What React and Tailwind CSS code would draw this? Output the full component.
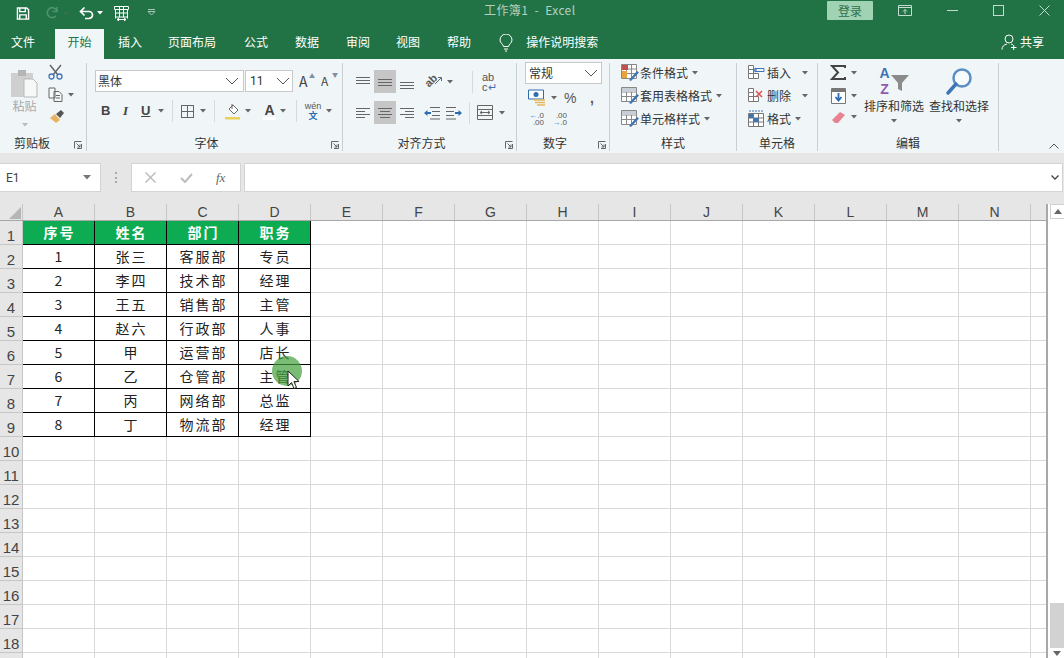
import React from 'react';

const cjk = { fontFamily: '"Noto Sans CJK SC", "Noto Sans", sans-serif' };

const tabs = ['插入', '页面布局', '公式', '数据', '审阅', '视图', '帮助'];
const tabGaps = ['ml-[14px]', 'ml-[26px]', 'ml-[28px]', 'ml-[27px]', 'ml-[27px]', 'ml-[26px]', 'ml-[27px]'];

const columns = ['A', 'B', 'C', 'D', 'E', 'F', 'G', 'H', 'I', 'J', 'K', 'L', 'M', 'N'];
const people = [
  ['序号', '姓名', '部门', '职务'],
  ['1', '张三', '客服部', '专员'],
  ['2', '李四', '技术部', '经理'],
  ['3', '王五', '销售部', '主管'],
  ['4', '赵六', '行政部', '人事'],
  ['5', '甲', '运营部', '店长'],
  ['6', '乙', '仓管部', '主管'],
  ['7', '丙', '网络部', '总监'],
  ['8', '丁', '物流部', '经理'],
];
const rows = Array.from({ length: 19 }, (_, i) => i + 1);

const Caret = ({ className = '' }) => (
  <svg width="6" height="4" viewBox="0 0 6 4" className={`shrink-0 ${className}`}>
    <path d="M0 0h6L3 3.5z" fill="#666" />
  </svg>
);

const Chevron = ({ className = '' }) => (
  <svg width="14" height="8" viewBox="0 0 14 8" className={`shrink-0 ${className}`}>
    <path d="M1 1l6 6 6-6" fill="none" stroke="#555" />
  </svg>
);

const Launcher = ({ className = '' }) => (
  <svg width="8" height="8" viewBox="0 0 8 8" className={`shrink-0 ${className}`}>
    <path d="M.5 7.500V.5H7.500M7.500 3v4.500H3M2.500 2.500l3.500 3.500M6 3.500V6H3.500" fill="none" stroke="#666" />
  </svg>
);

// three or so horizontal lines, used by the alignment buttons
const Lines = ({ y, x = [[0, 14], [0, 14], [0, 14]], color = '#666' }) => (
  <svg width="14" height="14" viewBox="0 0 14 14" className="shrink-0">
    {x.map(([a, b], i) => (
      <path key={i} d={`M${a} ${y + i * 3 + 0.5}H${b}`} stroke={color} />
    ))}
  </svg>
);

const Active = ({ children }) => (
  <div className="w-[22px] h-[23px] bg-[#c6c6c6] flex items-center justify-center">{children}</div>
);

const Sep = ({ className = '' }) => <div className={`w-px h-[22px] bg-[#d5dadc] shrink-0 ${className}`} />;

const Group = ({ width, label, labelClass = '', launcher, launcherClass, children }) => (
  <div className={`${width} shrink-0 h-[88px] border-r border-[#c9ced0] flex flex-col relative`}>
    <div className="h-[77px] -mt-[4px] flex flex-col">{children}</div>
    <div className={`text-xs leading-4 text-center text-[#333] mt-[1px] ${labelClass}`}>{label}</div>
    {launcher && <Launcher className={`absolute bottom-[2px] ${launcherClass}`} />}
  </div>
);

function TitleBar() {
  return (
    <div className="h-[28px] flex items-center relative text-white">
      <svg width="14" height="13" viewBox="0 0 14 14" className="ml-[16px] -mt-[2px]">
        <path d="M1 1h10l2 2v10H1z M3.5 1v4h6V1 M3.5 13V8.5h7V13" fill="none" stroke="#fff" strokeWidth="1.5" />
      </svg>
      <svg width="17" height="14" viewBox="0 0 17 14" className="ml-[14px] -mt-[2px]">
        <path d="M13 5a5 5 0 1 0-1 5M13 1v4.500H8.500" fill="none" stroke="#4f9270" strokeWidth="1.600" />
      </svg>
      <Caret className="ml-[2px] opacity-30" />
      <svg width="16" height="14" viewBox="0 0 16 14" className="ml-[9px] -mt-[2px]">
        <path d="M3 5.500h8a3.500 3.500 0 0 1 0 7H7M6.500 1.500L2.500 5.500l4 4" fill="none" stroke="#fff" strokeWidth="1.700" />
      </svg>
      <svg width="6" height="4" viewBox="0 0 6 4" className="ml-[3px] -mt-[2px]">
        <path d="M0 0h6L3 3.500z" fill="#fff" />
      </svg>
      <svg width="17" height="17" viewBox="0 0 17 17" className="ml-[10px] -mt-[2px]">
        <path d="M1.500 1.500h14v3h-14zM2.500 4.500v9M14.500 4.500v9M6.500 1.500v11M10.500 1.500v11M2.500 8h12M2.500 12h12M4 14.500h9M4 14.500l2-1.500M4 14.500l2 1.500M13 14.500l-2-1.500M13 14.500l-2 1.500" fill="none" stroke="#fff" />
      </svg>
      <svg width="9" height="7" viewBox="0 0 9 7" className="ml-[17px] -mt-[4px]">
        <path d="M1 .5h7M1 2.500l3.500 3.500L8 2.500z" fill="none" stroke="#a9c9b8" />
      </svg>
      <div className="absolute left-[484px] top-0 text-xs leading-5 text-[#b5cfc0] tracking-[0.4px] whitespace-pre">工作簿1  -  Excel</div>
      <div className="ml-auto flex items-center mb-[7px]">
        <div className="w-[46px] h-[19px] bg-[#a0d3b3] rounded-[1px] text-xs leading-[19px] text-center text-[#2f6f4c]">登录</div>
        <svg width="14" height="11" viewBox="0 0 14 11" className="ml-[25px]">
          <path d="M.5.500h13v10H.5zM.5 2.500h13M7 9V4.500M5 6.500l2-2 2 2" fill="none" stroke="#c4dccf" />
        </svg>
        <div className="w-[11px] h-px bg-[#c4dccf] ml-[35px]" />
        <div className="w-[11px] h-[11px] border border-[#c4dccf] ml-[35px]" />
        <svg width="11" height="11" viewBox="0 0 11 11" className="ml-[35px] mr-[14px]">
          <path d="M.5.500l10 10M10.500.500l-10 10" stroke="#c4dccf" />
        </svg>
      </div>
    </div>
  );
}

function TabBar() {
  return (
    <div className="h-[31px] flex items-end text-xs text-white relative">
      <div className="h-[30px] leading-[26px] ml-[11px]">文件</div>
      <div className="h-[30px] w-[49px] ml-[20px] bg-[#f0f6f8] text-[#217346] text-center leading-[26px]">开始</div>
      {tabs.map((t, i) => (
        <div key={t} className={`h-[30px] leading-[26px] ${tabGaps[i]}`}>{t}</div>
      ))}
      <svg width="14" height="18" viewBox="0 0 14 18" className="ml-[28px] mb-[7px]">
        <path d="M4.500 12.500C4 10 1 9 1 6a6 6 0 0 1 12 0c0 3-3 4-3.500 6.500zM5 15h4M6 17h2" fill="none" stroke="#fff" />
      </svg>
      <div className="h-[30px] leading-[26px] ml-[13px]">操作说明搜索</div>
      <div className="ml-auto mr-[20px] flex items-center h-[30px] pb-[4px]">
        <svg width="16" height="16" viewBox="0 0 16 16">
          <path d="M4 5a4 4 0 1 0 8 0 4 4 0 0 0-8 0zM1 15.500c0-3 2-5 5-5.500M10 10c1 .2 1.500.5 2 1M10 13.500h5.500M12.700 11v5" fill="none" stroke="#fff" />
        </svg>
        <span className="ml-[3px]">共享</span>
      </div>
    </div>
  );
}

function Clipboard() {
  return (
    <Group width="w-[87px]" label="剪贴板" labelClass="pr-[22px]" launcher launcherClass="right-[4px]">
      <div className="flex">
        <div className="ml-[10px] w-[29px] flex flex-col items-center">
          <svg width="29" height="30" viewBox="0 0 29 30" className="mt-[9px]">
            <path d="M1 5h22v24H1z" fill="#cfcfcf" />
            <path d="M8 2h8v6H8z" fill="#b5b5b5" />
            <path d="M14 11h9l4 4v14H14z" fill="#f6f8f8" stroke="#b7b7b7" />
          </svg>
          <div className="text-xs leading-4 text-[#a8a8a8]">粘贴</div>
          <Caret className="mt-[9px] opacity-40" />
        </div>
        <div className="ml-[9px] flex flex-col">
          <svg width="15" height="16" viewBox="0 0 15 16" className="mt-[5px]">
            <path d="M2 1l8 10M13 1L5 11" stroke="#666" strokeWidth="1.500" fill="none" />
            <circle cx="3.500" cy="12.500" r="2.500" fill="none" stroke="#3f74b5" strokeWidth="1.300" />
            <circle cx="11.500" cy="12.500" r="2.500" fill="none" stroke="#3f74b5" strokeWidth="1.300" />
          </svg>
          <div className="flex items-center mt-[7px]">
            <svg width="15" height="15" viewBox="0 0 15 15">
              <path d="M1 1h6v10H1zM6 4.500h5l3 3v7H6zM8 8.500h4M8 11h4" fill="#f4f8f9" stroke="#666" />
            </svg>
            <Caret className="ml-[5px]" />
          </div>
          <svg width="16" height="15" viewBox="0 0 16 15" className="mt-[7px] ml-[1px]">
            <path d="M1 9l5-4 5 6-4 3z" fill="#e6b45f" />
            <path d="M7 5l5-4 3 3-4 5z" fill="#555" />
          </svg>
        </div>
      </div>
    </Group>
  );
}

function Font() {
  return (
    <Group width="w-[256px]" label="字体" labelClass="pr-[16px]" launcher launcherClass="right-[3px]">
      <div className="flex items-center mt-[11px] ml-[8px] h-[22px]">
        <div className="w-[149px] h-[22px] bg-white border border-[#c8c8c8] flex items-center justify-between px-[2px] text-xs text-[#333]">
          黑体<Chevron className="mr-[2px]" />
        </div>
        <div className="w-[48px] h-[22px] ml-px bg-white border border-[#c8c8c8] flex items-center justify-between pl-[4px] pr-[2px] text-xs text-[#333]" style={{ fontFamily: 'Roboto, sans-serif' }}>
          11<Chevron />
        </div>
        <div className="ml-[6px] w-[14px] text-[14px] text-[#444] relative leading-none">A<span className="absolute -right-[2px] -top-[1px] text-[6px] text-[#7b8fa5]">▲</span></div>
        <div className="ml-[8px] w-[14px] text-xs text-[#444] relative leading-none">A<span className="absolute -right-[3px] -top-[3px] text-[6px] text-[#7b8fa5]">▼</span></div>
      </div>
      <div className="flex items-center mt-[7px] h-[24px] text-[#444]" style={{ fontFamily: '"Liberation Sans", sans-serif' }}>
        <span className="ml-[14px] w-[10px] text-[13px] font-bold">B</span>
        <span className="ml-[12px] w-[10px] text-[13px] italic font-bold" style={{ fontFamily: '"Liberation Serif", serif' }}>I</span>
        <span className="ml-[8px] w-[11px] text-[13px] font-bold underline">U</span>
        <Caret className="ml-[6px]" />
        <Sep className="ml-[8px]" />
        <div className="w-[13px] h-[13px] ml-[8px] border border-[#666] relative">
          <div className="absolute left-[5px] top-0 bottom-0 w-px bg-[#666]" />
          <div className="absolute top-[5px] left-0 right-0 h-px bg-[#666]" />
        </div>
        <Caret className="ml-[6px]" />
        <Sep className="ml-[8px]" />
        <svg width="17" height="17" viewBox="0 0 17 17" className="ml-[9px]">
          <path d="M5 6l4-4 5 5-4 4z" fill="#fff" stroke="#666" />
          <path d="M8 1v5" stroke="#666" />
          <path d="M1 14h15v2.500H1z" fill="#e8d25a" />
        </svg>
        <Caret className="ml-[4px]" />
        <div className="ml-[12px] w-[13px] text-[14px] font-bold leading-none text-center border-b-[3px] border-white">A</div>
        <Caret className="ml-[4px]" />
        <Sep className="ml-[10px]" />
        <div className="ml-[7px] w-[18px] flex flex-col items-center leading-none">
          <span className="text-[9px] text-[#555]">wén</span>
          <span className="text-[9px] text-[#2c6db0] font-bold" style={cjk}>文</span>
        </div>
        <Caret className="ml-[4px]" />
      </div>
    </Group>
  );
}

function Alignment() {
  return (
    <Group width="w-[174px]" label="对齐方式" labelClass="pr-[16px]" launcher launcherClass="right-[3px]">
      <div className="flex items-center mt-[11px] ml-[13px] h-[23px]">
        <Lines y={2} />
        <div className="ml-[4px]"><Active><Lines y={4} /></Active></div>
        <div className="ml-[4px]"><Lines y={7} /></div>
        <div className="ml-[10px] w-[19px] h-[17px] relative" style={{ fontFamily: '"Liberation Sans", sans-serif' }}>
          <span className="block w-[14px] text-[11px] leading-[14px] text-[#555] font-bold -rotate-45">ab</span>
          <svg width="9" height="9" viewBox="0 0 9 9" className="absolute right-0 top-[3px]">
            <path d="M1 8l6-6M4 1.500h3.500V5" fill="none" stroke="#666" />
          </svg>
        </div>
        <Caret className="ml-[4px]" />
        <Sep className="ml-[19px]" />
        <div className="ml-[9px] text-[11px] leading-[10px] text-[#555] w-[15px]" style={{ fontFamily: '"Liberation Sans", sans-serif' }}>ab<br />c<span className="text-[#3f74b5]">↵</span></div>
      </div>
      <div className="flex items-center mt-[8px] ml-[13px] h-[23px]">
        <Lines y={2} x={[[0, 14], [0, 9], [0, 14], [0, 9]]} />
        <div className="ml-[4px]"><Active><Lines y={2} x={[[0, 14], [2, 12], [0, 14], [2, 12]]} /></Active></div>
        <div className="ml-[4px]"><Lines y={2} x={[[0, 14], [5, 14], [0, 14], [5, 14]]} /></div>
        <svg width="16" height="14" viewBox="0 0 16 14" className="ml-[10px]">
          <path d="M6 1.500h10M8 5.500h8M8 9.500h8M6 13h10" stroke="#666" />
          <path d="M0 7l3.500-3v2H7v2H3.500v2z" fill="#2c6db0" />
        </svg>
        <svg width="16" height="14" viewBox="0 0 16 14" className="ml-[6px]">
          <path d="M0 1.500h10M0 5.500h8M0 9.500h8M0 13h10" stroke="#666" />
          <path d="M16 7l-3.500-3v2H9v2h3.500v2z" fill="#2c6db0" />
        </svg>
        <Sep className="ml-[7px]" />
        <svg width="16" height="15" viewBox="0 0 16 15" className="ml-[7px]">
          <path d="M.5.500h15v14H.5zM.5 4.500h15M.5 10.500h15M3 7.500h10M3 7.500l2-1.500M3 7.500l2 1.500M13 7.500l-2-1.500M13 7.500l-2 1.500" fill="none" stroke="#666" />
        </svg>
        <Caret className="ml-[6px]" />
      </div>
    </Group>
  );
}

function NumberGroup() {
  return (
    <Group width="w-[93px]" label="数字" labelClass="pr-[16px]" launcher launcherClass="right-[3px]">
      <div className="ml-[8px] mt-[3px] w-[77px] h-[22px] bg-white border border-[#c8c8c8] flex items-center justify-between pl-[3px] pr-[3px] text-xs text-[#333]">
        常规<Chevron />
      </div>
      <div className="flex items-center ml-[11px] mt-[3px] h-[21px] text-[#555]">
        <svg width="18" height="17" viewBox="0 0 18 17">
          <path d="M.5 1h15v9H.5z" fill="#fff" stroke="#2c6db0" />
          <circle cx="8" cy="5.500" r="2.500" fill="#2c6db0" />
          <path d="M6 11h11M7 13.500h10M9 16h8" stroke="#e4b95c" strokeWidth="1.500" />
        </svg>
        <Caret className="ml-[5px]" />
        <span className="ml-[7px] w-[14px] text-[14px] leading-none" style={{ fontFamily: '"Liberation Sans", sans-serif' }}>%</span>
        <span className="ml-[12px] text-[14px] font-bold leading-none" style={{ fontFamily: '"Liberation Sans", sans-serif' }}>,</span>
      </div>
      <div className="flex items-center ml-[11px] mt-[3px] h-[16px] text-[8px] leading-[7px] text-[#555]" style={{ fontFamily: '"Liberation Sans", sans-serif' }}>
        <div className="w-[16px] text-right"><span className="text-[#2c6db0]">←</span>.0<br />.00</div>
        <div className="w-[16px] ml-[7px] text-right">.00<br /><span className="text-[#2c6db0]">→</span>.0</div>
      </div>
    </Group>
  );
}

const StyleRow = ({ label, children, caret = 'ml-[4px]', className = '' }) => (
  <div className={`flex items-center h-[17px] text-xs text-[#333] ${className}`}>
    {children}
    <span className="ml-[1px]">{label}</span>
    <Caret className={caret} />
  </div>
);

const TableIcon = ({ accent }) => (
  <svg width="18" height="17" viewBox="0 0 18 17" className="shrink-0">
    <path d="M.5.500h15v14H.5zM.5 5h15M.5 9.500h15M5.500.500v14M10.500.500v14" fill="#fff" stroke="#888" />
    {accent === 'cond' && <path d="M1 1h6v5H1z" fill="#c0504d" />}
    {accent === 'cond' && <path d="M1 7h5v7H1z" fill="#e9a23b" />}
    {accent !== 'cond' && <path d="M1 1h14v4H1z" fill="#c9cdd6" />}
    <path d="M8 16l8-9 2 1.500L10 17z" fill="#3f74b5" />
  </svg>
);

function Styles() {
  return (
    <Group width="w-[127px]" label="样式">
      <div className="ml-[11px] mt-[5px] flex flex-col gap-[6px]">
        <StyleRow label="条件格式"><TableIcon accent="cond" /></StyleRow>
        <StyleRow label="套用表格格式"><TableIcon /></StyleRow>
        <StyleRow label="单元格样式"><TableIcon /></StyleRow>
      </div>
    </Group>
  );
}

const CellIcon = ({ children }) => (
  <svg width="17" height="17" viewBox="0 0 17 17" className="shrink-0">
    <path d="M.5 1.500h5v4h-5zM.5 5.500h5v4h-5zM.5 9.500h5v5h-5zM5.500 9.500h5v5h-5z" fill="#fff" stroke="#777" />
    {children}
  </svg>
);

function Cells() {
  return (
    <Group width="w-[81px]" label="单元格">
      <div className="ml-[11px] mt-[5px] flex flex-col gap-[6px]">
        <StyleRow label="插入" caret="ml-[10px]" className="gap-[1px]">
          <CellIcon><path d="M7 4.500h9v3H7zM5 6l3-2v4z" fill="#f0f6f8" stroke="#3f74b5" /></CellIcon>
        </StyleRow>
        <StyleRow label="删除" caret="ml-[10px]" className="gap-[1px]">
          <CellIcon><path d="M8 4l6 6M14 4l-6 6" stroke="#d9534f" strokeWidth="1.500" /></CellIcon>
        </StyleRow>
        <StyleRow label="格式" caret="ml-[3px]" className="gap-[1px]">
          <svg width="17" height="17" viewBox="0 0 17 17" className="shrink-0">
            <path d="M.5 3.500h15v13H.5zM.5 8h15M.5 12h15M5.500 3.500v13M10.500 3.500v13" fill="#fff" stroke="#777" />
            <path d="M1 4h4v4H1z" fill="#3f74b5" />
            <path d="M5.500 8h5v4h-5z" fill="#3f74b5" />
            <path d="M1 1h14" stroke="#3f74b5" strokeDasharray="2 1" />
          </svg>
        </StyleRow>
      </div>
    </Group>
  );
}

function Editing() {
  return (
    <Group width="w-[181px]" label="编辑">
      <div className="flex">
        <div className="ml-[12px] flex flex-col">
          <div className="flex items-center mt-[6px] h-[15px]">
            <svg width="16" height="15" viewBox="0 0 16 15">
              <path d="M15 3V1H2l6 6.500L2 14h13v-2" fill="none" stroke="#444" strokeWidth="2" />
            </svg>
            <Caret className="ml-[5px]" />
          </div>
          <div className="flex items-center mt-[7px] h-[17px]">
            <svg width="16" height="16" viewBox="0 0 16 16" className="ml-[1px]">
              <path d="M.5.500h14v15H.5z" fill="#fff" stroke="#777" />
              <path d="M1 1h13v3H1z" fill="#777" />
              <path d="M7.500 5v7M4.500 9l3 3.500 3-3.500" fill="none" stroke="#2c6db0" strokeWidth="1.800" />
            </svg>
            <Caret className="ml-[4px]" />
          </div>
          <div className="flex items-center mt-[6px] h-[14px]">
            <svg width="16" height="13" viewBox="0 0 16 13" className="ml-[1px]">
              <path d="M1 9l8-8 5 3-7 8H4z" fill="#e8828f" />
            </svg>
            <Caret className="ml-[4px]" />
          </div>
        </div>
        <div className="ml-[6px] w-[62px] flex flex-col items-center">
          <div className="w-[31px] h-[29px] mt-[6px] flex" style={{ fontFamily: '"Liberation Sans", sans-serif' }}>
            <div className="w-[12px] text-[14px] leading-[16px] font-bold text-center">
              <div className="text-[#3f74b5]">A</div>
              <div className="text-[#8e5bb0]">Z</div>
            </div>
            <svg width="19" height="17" viewBox="0 0 19 17" className="mt-[10px]">
              <path d="M0 0h18l-7 8v8l-4-2V8z" fill="#8b8b8b" />
            </svg>
          </div>
          <div className="text-xs leading-4 text-[#333] mt-[4px] whitespace-nowrap">排序和筛选</div>
          <Caret className="mt-[5px]" />
        </div>
        <div className="ml-[3px] w-[62px] flex flex-col items-center">
          <svg width="28" height="29" viewBox="0 0 28 29" className="mt-[8px]">
            <circle cx="17" cy="11" r="8.500" fill="#f8fbfc" stroke="#5b8ec2" strokeWidth="2.500" />
            <path d="M11 17l-8 9" stroke="#3f74b5" strokeWidth="3.500" strokeLinecap="round" />
          </svg>
          <div className="text-xs leading-4 text-[#333] mt-[2px] whitespace-nowrap">查找和选择</div>
          <Caret className="mt-[5px]" />
        </div>
      </div>
    </Group>
  );
}

function Ribbon() {
  return (
    <div className="h-[94px] bg-[#f0f6f8] flex items-start pt-[4px] relative border-b border-[#f5f5f5]">
      <Clipboard />
      <Font />
      <Alignment />
      <NumberGroup />
      <Styles />
      <Cells />
      <Editing />
      <svg width="10" height="6" viewBox="0 0 10 6" className="absolute right-[5px] bottom-[3px]">
        <path d="M.5 5.500L5 1l4.500 4.500" fill="none" stroke="#555" />
      </svg>
    </div>
  );
}

function FormulaBar() {
  return (
    <div className="h-[51px] pt-[10px] flex items-start text-[#444]">
      <div className="w-[101px] h-[29px] bg-white border border-[#d4d4d4] border-l-0 flex items-center justify-between pl-[6px] pr-[9px] text-xs" style={{ fontFamily: 'Roboto, sans-serif' }}>
        E1
        <svg width="8" height="5" viewBox="0 0 8 5"><path d="M0 0h8L4 4.500z" fill="#777" /></svg>
      </div>
      <div className="w-[2px] h-[11px] ml-[14px] mt-[9px] border-l-2 border-dotted border-[#aaa]" />
      <div className="w-[110px] h-[29px] ml-[14px] bg-white border border-[#d4d4d4] flex items-center">
        <svg width="11" height="11" viewBox="0 0 11 11" className="ml-[13px]">
          <path d="M.5.500l10 10M10.500.500l-10 10" stroke="#bdbdbd" strokeWidth="1.500" />
        </svg>
        <svg width="13" height="10" viewBox="0 0 13 10" className="ml-[24px]">
          <path d="M1 5l4 4 7-8" fill="none" stroke="#bdbdbd" strokeWidth="2" />
        </svg>
        <span className="ml-[23px] text-[13px] italic text-[#666]" style={{ fontFamily: '"Liberation Serif", serif' }}>fx</span>
      </div>
      <div className="flex-1 h-[29px] ml-[3px] mr-[1px] bg-white border border-[#d4d4d4] flex items-center justify-end pr-[3px]">
        <svg width="8" height="5" viewBox="0 0 8 5"><path d="M.5.500L4 4l3.500-3.500" fill="none" stroke="#444" strokeWidth="1.300" /></svg>
      </div>
    </div>
  );
}

function Sheet() {
  return (
    <div className="flex flex-1 min-h-0" style={{ fontFamily: '"Noto Sans CJK SC", sans-serif' }}>
      <div className="w-[1048px] border-r-2 border-[#a8a8a8] flex flex-col">
        <div className="h-[17px] flex shrink-0 border-b border-[#a8a8a8] text-sm leading-4 text-[#444]" style={{ fontFamily: '"Liberation Sans", sans-serif' }}>
          <div className="w-[23px] border-r border-[#c6c6c6] relative">
            <svg width="12" height="12" viewBox="0 0 12 12" className="absolute right-[1px] bottom-[1px]">
              <path d="M12 0v12H0z" fill="#b5b5b5" />
            </svg>
          </div>
          {columns.map(c => (
            <div key={c} className="w-[72px] border-r border-[#c6c6c6] text-center">{c}</div>
          ))}
        </div>
        {rows.map((r, i) => (
          <div key={r} className="h-[24px] flex shrink-0 bg-white">
            <div className="w-[23px] bg-[#e6e6e6] border-r border-b border-[#c6c6c6] text-[15px] leading-[30px] text-center text-[#444]" style={{ fontFamily: '"Liberation Sans", sans-serif' }}>{r < 19 ? r : ''}</div>
            {columns.map((c, j) => {
              const val = people[i] && people[i][j];
              const inTable = j < 4 && i < 9;
              const head = inTable && i === 0;
              return (
                <div
                  key={c}
                  className={
                    inTable
                      ? `w-[72px] border-r border-b border-black pl-[2px] text-center text-sm leading-[23px] tracking-[2px] ${head ? 'bg-[#0dab52] text-white font-bold' : 'text-[#222]'}`
                      : 'w-[72px] border-r border-b border-[#d9d9d9]'
                  }
                >
                  {val}
                </div>
              );
            })}
            <div className="flex-1 border-b border-[#d9d9d9]" />
          </div>
        ))}
      </div>
      <div className="flex-1 flex flex-col items-end pl-[2px] bg-white">
        <div className="w-[14px] h-[15px] shrink-0 border border-[#d0d0d0] border-r-0 flex items-center justify-center">
          <svg width="8" height="5" viewBox="0 0 8 5"><path d="M4 0l4 5H0z" fill="#666" /></svg>
        </div>
        <div className="flex-1" />
        <div className="w-full h-[45px] shrink-0 bg-[#d2d2d2]" />
        <div className="w-[14px] h-[9px] mt-[1px] shrink-0 flex items-start justify-center">
          <svg width="8" height="5" viewBox="0 0 8 5" className="mt-[2px]"><path d="M0 0h8L4 5z" fill="#666" /></svg>
        </div>
      </div>
    </div>
  );
}

export default function App() {
  return (
    <div className="w-[1064px] h-[658px] overflow-hidden bg-[#e6e6e6] flex flex-col relative" style={cjk}>
      <div className="bg-[#217346] shrink-0">
        <TitleBar />
        <TabBar />
      </div>
      <Ribbon />
      <FormulaBar />
      <Sheet />

      {/* click highlight and mouse pointer */}
      <div className="absolute left-[272px] top-[356px] w-[30px] h-[30px] rounded-full bg-[#41a03c]/70" />
      <svg width="14" height="20" viewBox="0 0 14 20" className="absolute left-[287px] top-[370px]">
        <path d="M1 1v15l3.500-3.500 2.500 6 2.500-1-2.500-6H12z" fill="#fff" stroke="#222" />
      </svg>
    </div>
  );
}
